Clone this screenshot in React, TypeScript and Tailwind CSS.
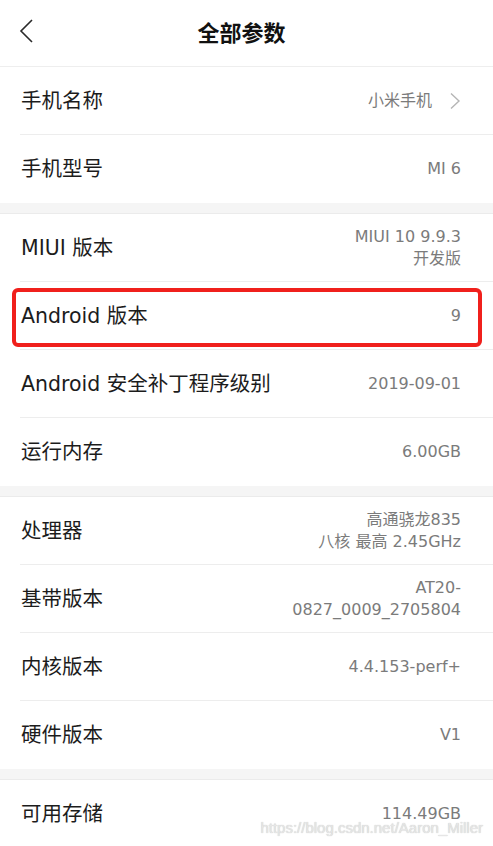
import React from "react";

type Row = { label: string; value: string[]; chevron?: boolean; highlight?: boolean };

const sections: Row[][] = [
  [
    { label: "手机名称", value: ["小米手机"], chevron: true },
    { label: "手机型号", value: ["MI 6"] },
  ],
  [
    { label: "MIUI 版本", value: ["MIUI 10 9.9.3", "开发版"] },
    { label: "Android 版本", value: ["9"], highlight: true },
    { label: "Android 安全补丁程序级别", value: ["2019-09-01"] },
    { label: "运行内存", value: ["6.00GB"] },
  ],
  [
    { label: "处理器", value: ["高通骁龙835", "八核 最高 2.45GHz"] },
    { label: "基带版本", value: ["AT20-", "0827_0009_2705804"] },
    { label: "内核版本", value: ["4.4.153-perf+"] },
    { label: "硬件版本", value: ["V1"] },
  ],
  [{ label: "可用存储", value: ["114.49GB"] }],
];

const font = { fontFamily: '"DejaVu Sans", "Noto Sans CJK SC", sans-serif' };

function RowItem({ row, last }: { row: Row; last: boolean }) {
  return (
    <div
      className={`relative flex items-center justify-between h-[68px] pl-[21px] pr-[32px] ${
        last ? "" : "after:absolute after:left-[20px] after:right-0 after:bottom-0 after:h-px after:bg-[#ededed]"
      }`}
    >
      <span className="text-[20.5px] text-[#1c1c1c] leading-none">{row.label}</span>
      <div className="flex items-center">
        <div className="flex flex-col items-end text-[16px] leading-[22px] text-[#7b7b7b]">
          {row.value.map((v) => (
            <span key={v}>{v}</span>
          ))}
        </div>
        {row.chevron && (
          <svg width="14" height="18" viewBox="0 0 14 18" className="ml-[16px] mr-[-1px]">
            <path d="M3 1.5 L11 9 L3 16.5" fill="none" stroke="#b5b5b5" strokeWidth="1.4" />
          </svg>
        )}
      </div>
      {row.highlight && (
        <div className="absolute left-[12px] right-[11px] top-[6px] bottom-[3px] border-[4px] border-[#f0201c] rounded-[6px]" />
      )}
    </div>
  );
}

export default function App() {
  return (
    <div className="relative w-[493px] h-[846px] bg-white overflow-hidden" style={font}>
      <div className="relative flex items-center justify-center h-[67px] border-b border-[#eeeeee]">
        <svg width="16" height="26" viewBox="0 0 16 26" className="absolute left-[19px] top-[18px]">
          <path d="M13 2 L2 13 L13 24" fill="none" stroke="#2a2a2a" strokeWidth="1.6" />
        </svg>
        <span
          className="text-[22px] font-bold text-[#111] mr-[10px] mt-[-4px]"
          style={{ fontFamily: '"Noto Sans CJK SC", sans-serif' }}
        >
          全部参数
        </span>
      </div>
      {sections.map((sec, si) => (
        <div key={si}>
          {si > 0 && <div className="h-[10px] bg-[#f5f5f5] border-b border-[#ebebeb] box-content" />}
          {sec.map((row, ri) => (
            <RowItem key={row.label} row={row} last={ri === sec.length - 1} />
          ))}
        </div>
      ))}
      <div
        className="absolute right-[10px] bottom-[7px] text-[15px] text-[#e6e6e6]"
        style={{ fontFamily: '"Liberation Sans", sans-serif', textShadow: "0 0 1px #bdbdbd" }}
      >
        https://blog.csdn.net/Aaron_Miller
      </div>
    </div>
  );
}
